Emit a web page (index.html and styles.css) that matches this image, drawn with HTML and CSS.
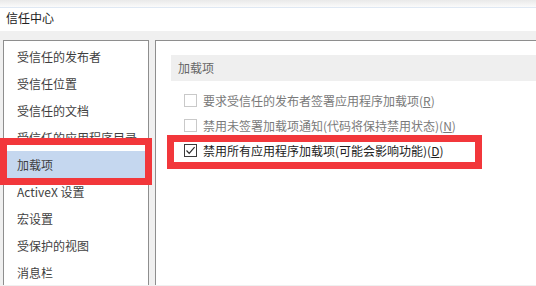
FILE: index.html
```html
<!DOCTYPE html>
<html lang="zh-CN">
<head>
    <meta charset="UTF-8">
    <title>信任中心</title>
    <link rel="stylesheet" href="styles.css">
</head>
<body>
    <div class="page">
        <div class="top-strip"></div>
        <div class="title-bar">信任中心</div>

        <div class="main">
            <ul class="nav">
                <li class="nav-item">受信任的发布者</li>
                <li class="nav-item">受信任位置</li>
                <li class="nav-item">受信任的文档</li>
                <li class="nav-item">受信任的应用程序目录</li>
                <li class="nav-item active">加载项</li>
                <li class="nav-item">ActiveX 设置</li>
                <li class="nav-item">宏设置</li>
                <li class="nav-item">受保护的视图</li>
                <li class="nav-item">消息栏</li>
            </ul>

            <div class="content">
                <div class="section-title">加载项</div>
                <div class="options">
                    <label class="option disabled">
                        <span class="box"></span>
                        <span>要求受信任的发布者签署应用程序加载项(<u>R</u>)</span>
                    </label>
                    <label class="option disabled">
                        <span class="box"></span>
                        <span>禁用未签署加载项通知(代码将保持禁用状态)(<u>N</u>)</span>
                    </label>
                    <label class="option">
                        <span class="box checked">
                            <svg width="11" height="11" viewBox="0 0 11 11">
                                <path d="M1.5 5.5 L4.2 8.3 L9.6 2.2" fill="none" stroke="#2b2b2b" stroke-width="1.2"/>
                            </svg>
                        </span>
                        <span>禁用所有应用程序加载项(可能会影响功能)(<u>D</u>)</span>
                    </label>
                </div>
            </div>
        </div>

        <!-- 红色标注框 -->
        <div class="mark mark-nav"></div>
        <div class="mark mark-option"></div>
    </div>
</body>
</html>
```

FILE: styles.css
```css
:root {
    --panel-border: #8e8e8e;
    --bg-gray: #f0f0f0;
    --mark-red: #f2373b;
    --text: #3f3f3f;
}

* {
    box-sizing: border-box;
    margin: 0;
    padding: 0;
}

body {
    font-family: "Noto Sans CJK SC", "Noto Sans", sans-serif;
    font-size: 12px;
    color: var(--text);
    background: var(--bg-gray);
}

.page {
    position: relative;
    width: 536px;
    height: 286px;
    overflow: hidden;
}

.top-strip {
    height: 8px;
    background: linear-gradient(#e9e9e9, #fbfbfb);
    border-bottom: 1px solid #dfe8f3;
}

.title-bar {
    height: 23px;
    padding-left: 6px;
    line-height: 19px;
    background: #fff;
    color: #222;
}

.main {
    display: flex;
    gap: 6px;
    height: 254px;
    padding: 9px 0 0 3px;
}

.nav {
    list-style: none;
    width: 146px;
    flex-shrink: 0;
    padding-top: 2px;
    background: #fff;
    border: 1px solid var(--panel-border);
    border-bottom: none;
}

.nav-item {
    height: 27px;
    line-height: 27px;
    padding-left: 13px;
    white-space: nowrap;
    overflow: hidden;
}

.nav-item.active {
    background: #c5d7ef;
}

.content {
    flex: 1;
    padding: 14px 0 0 15px;
    background: #fff;
    border-top: 1px solid var(--panel-border);
    border-left: 1px solid var(--panel-border);
}

.section-title {
    height: 26px;
    line-height: 26px;
    padding-left: 7px;
    background: #efefef;
    color: #666;
}

.options {
    padding: 7px 0 0 13px;
}

.option {
    display: flex;
    align-items: center;
    height: 25px;
    white-space: nowrap;
    color: #222;
}

.option.disabled {
    color: #7a7a7a;
}

.box {
    display: flex;
    align-items: center;
    justify-content: center;
    width: 13px;
    height: 13px;
    margin-right: 6px;
    border: 1px solid #c9c9c9;
    background: #fff;
}

.box.checked {
    border-color: #3a3a3a;
}

.mark {
    position: absolute;
    border: 7px solid var(--mark-red);
}

.mark-nav {
    left: 0;
    top: 138px;
    width: 152px;
    height: 47px;
}

.mark-option {
    left: 167px;
    top: 135px;
    width: 315px;
    height: 34px;
}
```
